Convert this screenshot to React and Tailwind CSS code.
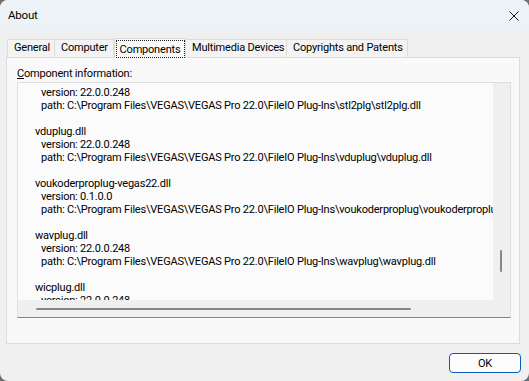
import { useState } from "react";

const font = { fontFamily: "Roboto, 'Liberation Sans', sans-serif" };

const tabs = [
  { name: "General", w: "w-[48px]" },
  { name: "Computer", w: "w-[60px]" },
  { name: "Components", w: "w-[72px]" },
  { name: "Multimedia Devices", w: "w-[102px]" },
  { name: "Copyrights and Patents", w: "w-[122px]" },
];

const base = "C:\\Program Files\\VEGAS\\VEGAS Pro 22.0\\FileIO Plug-Ins\\";

// what is visible in the scrolled list
const lines = [
  { t: "version: 22.0.0.248", sub: true },
  { t: "path: " + base + "stl2plg\\stl2plg.dll", sub: true },
  { t: "" },
  { t: "vduplug.dll" },
  { t: "version: 22.0.0.248", sub: true },
  { t: "path: " + base + "vduplug\\vduplug.dll", sub: true },
  { t: "" },
  { t: "voukoderproplug-vegas22.dll" },
  { t: "version: 0.1.0.0", sub: true },
  { t: "path: " + base + "voukoderproplug\\voukoderproplug-vegas22.dll", sub: true },
  { t: "" },
  { t: "wavplug.dll" },
  { t: "version: 22.0.0.248", sub: true },
  { t: "path: " + base + "wavplug\\wavplug.dll", sub: true },
  { t: "" },
  { t: "wicplug.dll" },
  { t: "version: 22.0.0.248", sub: true },
];

export default function App() {
  const [active, setActive] = useState("Components");

  return (
    <div className="w-[529px] h-[381px] bg-[#6e6e6e]" style={font}>
      <div className="w-full h-full rounded-[8px] overflow-hidden bg-[#f0f0f0] flex flex-col text-[11px] tracking-[-0.2px] text-black">
        {/* Title bar */}
        <div className="h-[31px] shrink-0 bg-[#edf2f7] flex items-center justify-between pl-[8px] pr-[10px]">
          <span className="text-[11.5px]">About</span>
          <svg width="10" height="10" viewBox="0 0 10 10">
            <path d="M0.5 0.5 L9.5 9.5 M9.5 0.5 L0.5 9.5" stroke="#1a1a1a" strokeWidth="1" />
          </svg>
        </div>

        {/* Tabs */}
        <div className="mt-[6px] px-[7px] h-[20px] flex items-end shrink-0 relative z-10">
          {tabs.map((tab) => {
            const sel = tab.name === active;
            return (
              <button
                key={tab.name}
                onClick={() => setActive(tab.name)}
                className={
                  sel
                    ? `${tab.w} h-[20px] -mb-px bg-[#f9f9f9] border border-b-0 border-[#d9d9d9] flex items-start justify-center pt-px`
                    : `${tab.w} h-[18px] bg-[#f3f3f3] border border-b-0 border-[#dcdcdc] -ml-px first:ml-0 flex items-center pl-[6px] whitespace-nowrap`
                }
              >
                {sel ? (
                  <span className="w-[69px] h-[18px] border border-dotted border-[#222] flex items-center justify-center leading-none">
                    {tab.name}
                  </span>
                ) : (
                  tab.name
                )}
              </button>
            );
          })}
        </div>

        {/* Tab panel */}
        <div className="mx-[6px] mr-[9px] h-[287px] shrink-0 bg-[#f9f9f9] border border-[#dcdcdc] pt-[9px] pl-[10px] pr-[8px]">
          <div className="h-[14px] leading-[14px]">
            <span className="underline">C</span>omponent information:
          </div>
          <div className="mt-[1px] h-[236px] border border-[#dedede] border-b-[#858585] flex flex-col">
            <div className="flex flex-1 min-h-0">
              <div className="flex-1 bg-[#fbfbfb] overflow-hidden pt-[3px]">
                {lines.map((l, i) => (
                  <div
                    key={i}
                    className={`h-[13px] leading-[13px] whitespace-nowrap ${l.sub ? "pl-[23px]" : "pl-[17px]"}`}
                  >
                    {l.t}
                  </div>
                ))}
              </div>
              <div className="w-[17px] bg-[#efefef] pt-[167px] pl-[7px]">
                <div className="w-[2px] h-[22px] bg-[#868686] rounded-full" />
              </div>
            </div>
            <div className="h-[17px] shrink-0 bg-[#efefef] flex items-center pl-[18px]">
              <div className="w-[375px] h-[2px] bg-[#868686] rounded-full" />
            </div>
          </div>
        </div>

        {/* Footer */}
        <div className="flex justify-end pt-[9px] pr-[8px]">
          <button className="w-[72px] h-[20px] rounded-[4px] border border-[#0a5cb5] bg-[#fdfdfd] text-[11px] leading-none">
            OK
          </button>
        </div>
      </div>
    </div>
  );
}
